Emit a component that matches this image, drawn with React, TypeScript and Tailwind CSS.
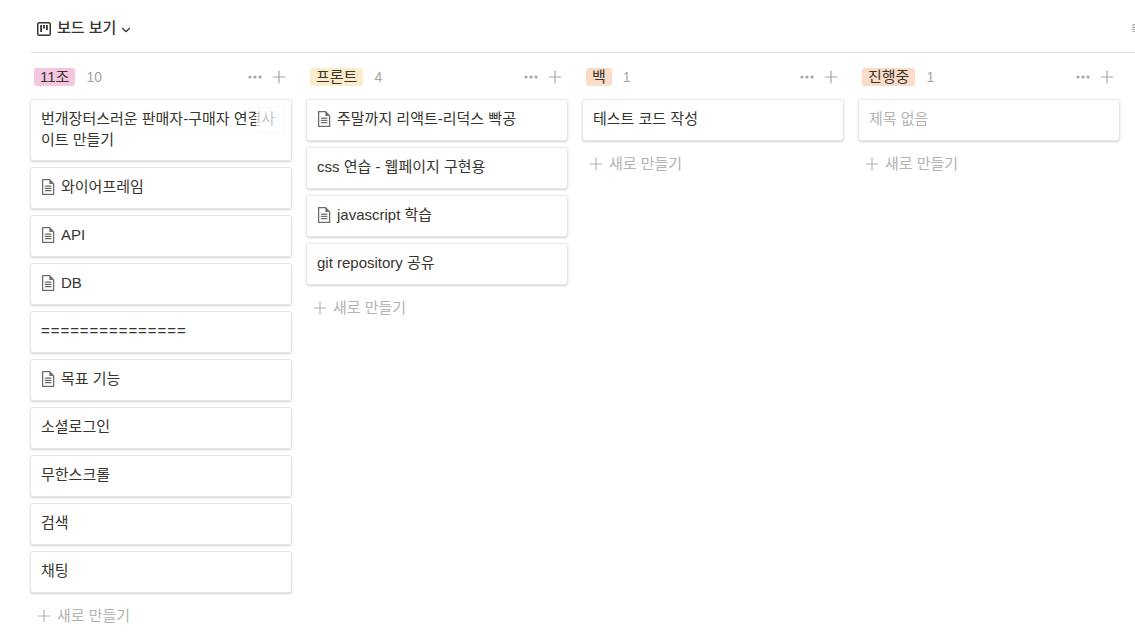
import { ChevronDown, Plus } from "lucide-react";

type Card = { title: string; doc?: boolean; muted?: boolean };
type Column = { name: string; count: number; tag: string; cards: Card[] };

const columns: Column[] = [
  {
    name: "11조",
    count: 10,
    tag: "bg-[#f5c6e0]",
    cards: [
      { title: "번개장터스러운 판매자-구매자 연결사이트 만들기" },
      { title: "와이어프레임", doc: true },
      { title: "API", doc: true },
      { title: "DB", doc: true },
      { title: "===============" },
      { title: "목표 기능", doc: true },
      { title: "소셜로그인" },
      { title: "무한스크롤" },
      { title: "검색" },
      { title: "채팅" },
    ],
  },
  {
    name: "프론트",
    count: 4,
    tag: "bg-[#fbeccb]",
    cards: [
      { title: "주말까지 리액트-리덕스 빡공", doc: true },
      { title: "css 연습 - 웹페이지 구현용" },
      { title: "javascript 학습", doc: true },
      { title: "git repository 공유" },
    ],
  },
  {
    name: "백",
    count: 1,
    tag: "bg-[#fbdcc8]",
    cards: [{ title: "테스트 코드 작성" }],
  },
  {
    name: "진행중",
    count: 1,
    tag: "bg-[#fbdcc8]",
    cards: [{ title: "제목 없음", muted: true }],
  },
];

function BoardIcon() {
  return (
    <svg width="14" height="14" viewBox="0 0 14 14" fill="none" className="shrink-0">
      <rect x="0.75" y="0.75" width="12.5" height="12.5" rx="1.5" stroke="#37352f" strokeWidth="1.5" />
      <path d="M3.2 3h1.8v7H3.2zM6.1 3h1.8v3.6H6.1zM9 3h1.8v5H9z" fill="#37352f" />
    </svg>
  );
}

function DocIcon() {
  return (
    <svg width="14" height="16" viewBox="0 0 14 16" fill="none" className="shrink-0 mr-[6px]">
      <path d="M1.6 0.7H8.6L12.6 4.7V15.3H1.6V0.7Z" stroke="#6f6e69" strokeWidth="1.3" fill="#fff" />
      <path d="M8.4 1V5H12.4L8.4 1Z" fill="#6f6e69" />
      <path d="M3.8 7.2H10.4M3.8 9.4H10.4M3.8 11.6H10.4" stroke="#6f6e69" strokeWidth="1.2" />
    </svg>
  );
}

function Dots() {
  return (
    <svg width="14" height="4" viewBox="0 0 14 4" fill="#a6a5a1">
      <circle cx="2" cy="2" r="1.6" />
      <circle cx="7" cy="2" r="1.6" />
      <circle cx="12" cy="2" r="1.6" />
    </svg>
  );
}

function BoardCard({ card, first }: { card: Card; first: boolean }) {
  const wrapped = card.title.length > 20;
  const rule = card.title.startsWith("=");
  return (
    <div
      className={`relative rounded-[3px] bg-white border border-[#e6e6e5] shadow-[0_1px_2px_rgba(15,15,15,0.18)] px-[10px] ${
        wrapped ? "h-[62px] pt-[8px]" : "h-[42px] flex items-center pb-[3px]"
      }`}
    >
      {card.doc && <DocIcon />}
      <span
        className={`block text-[15px] leading-[21px] ${rule ? "tracking-[0.95px]" : ""} ${
          card.muted ? "text-[#b4b4b0]" : "text-[#37352f]"
        }`}
      >
        {card.title}
      </span>
      {wrapped && first && (
        <div className="absolute left-[225px] top-[8px] w-[28px] h-[24px] rounded-[3px] bg-white/70 shadow-[0_0_2px_rgba(15,15,15,0.12)]" />
      )}
    </div>
  );
}

function BoardColumn({ col }: { col: Column }) {
  return (
    <div className="w-[262px] shrink-0 flex flex-col">
      <div className="h-[18px] flex items-center pl-[4px] pr-[3px] mb-[13px]">
        <span className={`${col.tag} rounded-[3px] h-[18px] px-[6px] text-[15px] leading-[17px] text-[#37352f]`}>
          {col.name}
        </span>
        <span className="ml-[11px] text-[14px] text-[#a6a5a1]">{col.count}</span>
        <div className="ml-auto flex items-center gap-[7px] text-[#a6a5a1]">
          <Dots />
          <Plus size={20} strokeWidth={1.4} />
        </div>
      </div>
      <div className="flex flex-col gap-[6px]">
        {col.cards.map((card, i) => (
          <BoardCard key={card.title} card={card} first={i === 0} />
        ))}
      </div>
      <div className="flex items-center h-[32px] mt-[7px] pl-[4px] text-[15px] text-[#b4b4b0]">
        <Plus size={20} strokeWidth={1.4} className="mr-[3px]" />
        새로 만들기
      </div>
    </div>
  );
}

export default function App() {
  return (
    <div
      className="relative w-[1135px] h-[642px] overflow-hidden bg-white"
      style={{ fontFamily: '"Liberation Sans", "Noto Sans CJK KR", sans-serif' }}
    >
      <div className="ml-[31px] h-[53px] border-b border-[#e3e3e2] flex items-center pl-[6px] pt-[5px] gap-[6px]">
        <BoardIcon />
        <span className="text-[15px] font-medium text-[#37352f]">보드 보기</span>
        <ChevronDown size={14} strokeWidth={2} className="text-[#37352f] -ml-[3px] mt-[2px]" />
      </div>
      <div className="ml-[30px] flex gap-[14px] pt-[15px]">
        {columns.map((col) => (
          <BoardColumn key={col.name} col={col} />
        ))}
      </div>
      <span className="absolute left-[1131px] top-[22px] text-[10px] text-[#9a9a97]">목</span>
    </div>
  );
}
